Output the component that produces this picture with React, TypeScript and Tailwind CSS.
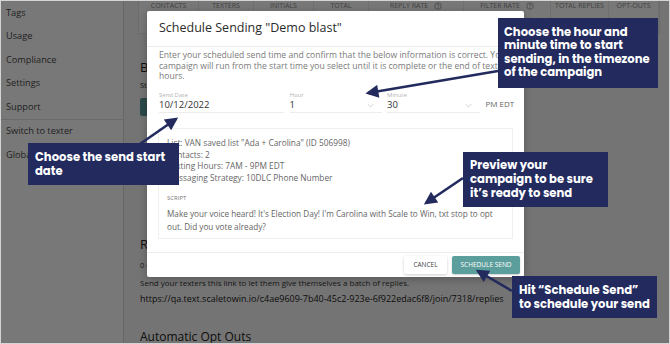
import React from 'react';

const sideItems = ['Tags', 'Usage', 'Compliance', 'Settings', 'Support'];

const columns = [
  { label: 'Contacts', w: 'w-[60px]' },
  { label: 'Texters', w: 'w-[55px]' },
  { label: 'Initials', w: 'w-[60px]' },
  { label: 'Total', w: 'w-[55px]' },
  { label: 'Reply Rate', w: 'w-[95px]', info: true },
  { label: 'Filter Rate', w: 'w-[87px]', info: true },
  { label: 'Total Replies', w: 'w-[58px]' },
  { label: 'Opt-Outs', w: 'w-[50px]' },
];

const InfoIcon = () => (
  <svg width="8" height="8" viewBox="0 0 16 16" className="inline-block ml-[6px] -mt-[1px]">
    <circle cx="8" cy="8" r="6.5" fill="none" stroke="currentColor" strokeWidth="1.4" />
    <path d="M6.3 6.3a1.8 1.8 0 1 1 2.4 1.7c-.5.2-.7.5-.7 1v.5" fill="none" stroke="currentColor" strokeWidth="1.4" />
    <circle cx="8" cy="11.6" r=".8" fill="currentColor" />
  </svg>
);

const Chevron = () => (
  <svg width="7" height="5" viewBox="0 0 10 6" className="text-[#c8c8c8]">
    <path d="M1 1l4 4 4-4" fill="none" stroke="currentColor" strokeWidth="1.2" />
  </svg>
);

function Sidebar() {
  return (
    <aside className="w-[123px] shrink-0 bg-white border-r border-[#d8d8d8] shadow-[2px_0_5px_rgba(0,0,0,0.12)] text-[9.2px] text-[#474747]">
      <ul>
        {sideItems.map((item) => (
          <li key={item} className="h-[23.5px] flex items-center px-[5px]">
            {item}
          </li>
        ))}
      </ul>
      <div className="border-t border-[#e2e2e2]">
        <div className="h-[23.5px] flex items-center px-[5px]">Switch to texter</div>
        <div className="h-[23.5px] flex items-center px-[5px]">Global Settings</div>
      </div>
    </aside>
  );
}

function Field({ label, value, w, select }: { label: string; value: string; w: string; select?: boolean }) {
  return (
    <div className={`${w} shrink-0`}>
      <div className="h-[8px] leading-[8px] text-[6px] text-[#b4b4b4]">{label}</div>
      <div className="h-[14px] flex items-center justify-between border-b border-[#ececec] text-[9.5px] text-[#333]">
        <span>{value}</span>
        {select && (
          <span className="pr-[8px]">
            <Chevron />
          </span>
        )}
      </div>
    </div>
  );
}

function Modal() {
  return (
    <div className="absolute left-[146px] top-[10px] w-[377px] h-[266px] bg-white rounded-[2px] shadow-[0_2px_8px_rgba(0,0,0,0.25)] flex flex-col">
      <div className="h-[36px] shrink-0 flex items-center px-[12px] border-b border-[#ececec]">
        <h2 className="text-[12.5px] text-[#2b2b2b]">Schedule Sending "Demo blast"</h2>
      </div>
      <div className="px-[11px]">
        <p className="pt-[3px] pl-[1px] text-[8.6px] leading-[10.5px] text-[#7a7a7a] whitespace-nowrap">
          Enter your scheduled send time and confirm that the below information is correct. Your
          <br />
          campaign will run from the start time you select until it is complete or the end of texting
          <br />
          hours.
        </p>
        <div className="mt-[9.5px] flex items-end gap-[5.5px] pl-[1px]">
          <Field label="Send Date" value="10/12/2022" w="w-[125px]" />
          <Field label="Hour" value="1" w="w-[92px]" select />
          <Field label="Minute" value="30" w="w-[93px]" select />
          <div className="h-[18px] flex items-center whitespace-nowrap text-[8px] text-[#666]">PM EDT</div>
        </div>
        <div className="mt-[15px] h-[111px] border border-[#efefef] pt-[8px] pl-[8px] text-[8.3px] text-[#666] whitespace-nowrap">
          <div className="leading-[11.5px]">
            <div>List: VAN saved list "Ada + Carolina" (ID 506998)</div>
            <div>Contacts: 2</div>
            <div>Texting Hours: 7AM - 9PM EDT</div>
            <div>Messaging Strategy: 10DLC Phone Number</div>
          </div>
          <div className="mt-[11px] h-[8px] leading-[8px] text-[6px] uppercase text-[#777]">Script</div>
          <div className="mt-[6px] leading-[12.5px] text-[8.2px]">
            Make your voice heard! It's Election Day! I'm Carolina with Scale to Win, txt stop to opt
            <br />
            out. Did you vote already?
          </div>
        </div>
      </div>
      <div className="mt-auto h-[25px] border-t border-[#ececec] flex items-center justify-end gap-[5px] pr-[4px]">
        <button className="w-[43px] h-[18px] bg-white rounded-[2px] shadow-[0_1px_3px_rgba(0,0,0,0.2)] text-[6.5px] uppercase text-[#444]">
          Cancel
        </button>
        <button className="w-[68px] h-[18px] bg-[#5c9e9b] rounded-[2px] shadow-[0_1px_2px_rgba(0,0,0,0.2)] text-[6.5px] uppercase text-white">
          Schedule Send
        </button>
      </div>
    </div>
  );
}

function Callout({ className, children }: { className: string; children: React.ReactNode }) {
  return (
    <div
      className={`absolute bg-[#222a5e] text-white font-bold text-[11.6px] whitespace-nowrap font-['Poppins','Open_Sans',sans-serif] ${className}`}
    >
      {children}
    </div>
  );
}

function Arrows() {
  const arrows = [
    [497, 70, 367, 92],
    [139, 143, 175, 118],
    [462, 177, 425, 202],
    [511, 290, 477, 270],
  ];
  return (
    <svg className="absolute inset-0 pointer-events-none" width="670" height="344">
      <defs>
        <marker id="head" viewBox="0 0 10 10" refX="8" refY="5" markerWidth="16" markerHeight="13" markerUnits="userSpaceOnUse" orient="auto">
          <path d="M0 0L10 5L0 10z" fill="#222a5e" />
        </marker>
      </defs>
      {arrows.map(([x1, y1, x2, y2], i) => (
        <line key={i} x1={x1} y1={y1} x2={x2} y2={y2} stroke="#222a5e" strokeWidth="2.6" markerEnd="url(#head)" />
      ))}
    </svg>
  );
}

export default function App() {
  return (
    <div className="relative w-[670px] h-[344px] overflow-hidden border border-[#d4d4d4] font-['Open_Sans',sans-serif]">
      <div className="flex h-full">
        <Sidebar />
        <main className="flex-1 bg-[#f7f7f7] px-[16px]">
          <div className="h-[33px] -ml-[2px] bg-white border border-[#e6e6e6] border-t-0 flex text-[7px] uppercase text-[#8a8a8a]">
            {columns.map((c) => (
              <div key={c.label} className={`${c.w} border-r border-[#ececec] text-center leading-[10px] px-[4px]`}>
                {c.label}
                {c.info && <InfoIcon />}
              </div>
            ))}
          </div>
          <h3 className="mt-[22px] h-[22px] leading-[22px] text-[13px] text-[#222]">Basics</h3>
          <p className="mt-[2px] h-[10px] leading-[10px] text-[7.5px] text-[#333]">Status: Not started</p>
          <div className="mt-[8px] w-[80px] h-[18px] bg-[#5c9e9b] rounded-[2px]" />
          <h3 className="mt-[117px] h-[22px] leading-[22px] text-[13px] text-[#222]">Replies</h3>
          <p className="mt-[5px] h-[10px] leading-[10px] text-[7.5px] text-[#333]">0 of 0 replies assigned</p>
          <p className="mt-[8px] h-[10px] leading-[10px] text-[8px] text-[#333]">
            Send your texters this link to let them give themselves a batch of replies.
          </p>
          <p className="mt-[5px] h-[12px] leading-[12px] text-[9px] text-[#222]">
            https://qa.text.scaletowin.io/c4ae9609-7b40-45c2-923e-6f922edac6f8/join/7318/replies
          </p>
          <h3 className="mt-[23px] h-[18px] leading-[18px] text-[12px] text-[#222]">Automatic Opt Outs</h3>
        </main>
      </div>
      <div className="absolute inset-0 bg-black/[0.53]" />
      <Modal />
      <Callout className="left-[497px] top-[17px] w-[160px] h-[70px] pt-[8px] pl-[6px] leading-[13.4px]">
        Choose the hour and
        <br />
        minute time to start
        <br />
        sending, in the timezone
        <br />
        of the campaign
      </Callout>
      <Callout className="left-[27px] top-[142px] w-[151px] h-[42px] pt-[7px] pl-[7px] leading-[14px]">
        Choose the send start
        <br />
        date
      </Callout>
      <Callout className="left-[462px] top-[151px] w-[145px] h-[55px] pt-[6px] pl-[7px] leading-[14px]">
        Preview your
        <br />
        campaign to be sure
        <br />
        it’s ready to send
      </Callout>
      <Callout className="left-[511px] top-[275px] w-[145px] h-[42px] pt-[7px] pl-[7px] leading-[14px]">
        Hit “Schedule Send”
        <br />
        to schedule your send
      </Callout>
      <Arrows />
    </div>
  );
}
